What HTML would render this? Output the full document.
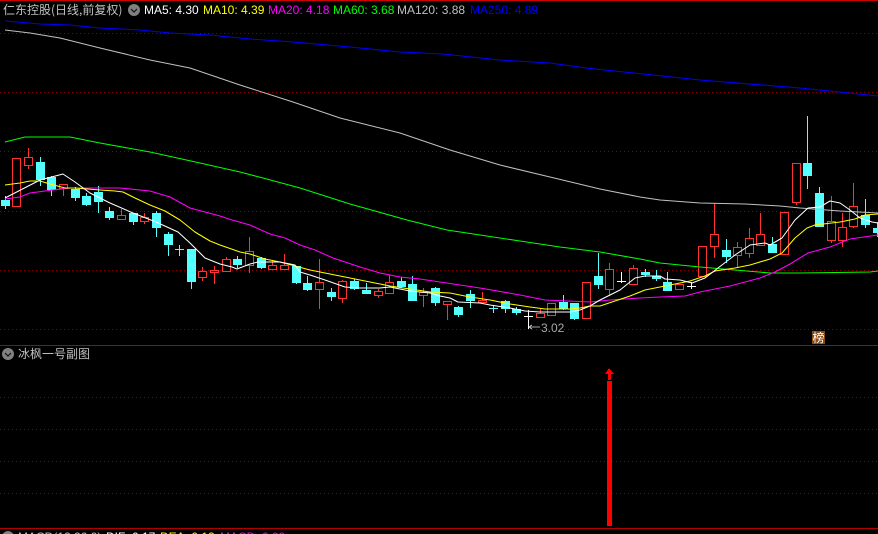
<!DOCTYPE html>
<html><head><meta charset="utf-8"><style>
html,body{margin:0;padding:0;background:#000;width:878px;height:534px;overflow:hidden}
#p{position:relative;width:878px;height:534px;overflow:hidden;background:#000}
svg{position:absolute;left:0;top:0}
.t{position:absolute;white-space:nowrap;font:12px/14px "Liberation Sans",sans-serif}
.z{font-family:"WenQuanYi Zen Hei","Noto Sans CJK SC",sans-serif;color:#c0c0c0}
.g{position:absolute;left:0;width:878px;height:1px;background:repeating-linear-gradient(90deg,#8c0000 0,#8c0000 1px,#000 1px,#000 4px)}
</style></head><body><div id="p">
<div class="g" style="top:33px"></div>
<div class="g" style="top:92px"></div>
<div class="g" style="top:151px"></div>
<div class="g" style="top:211px"></div>
<div class="g" style="top:270px"></div>
<div class="g" style="top:329px"></div>
<div class="g" style="top:397px"></div>
<div class="g" style="top:429px"></div>
<div class="g" style="top:461px"></div>
<div class="g" style="top:493px"></div>
<svg width="878" height="534" viewBox="0 0 878 534" fill="none">
<rect x="0" y="0" width="878" height="1" fill="#d00000"/>
<path d="M0 345.5H878" stroke="#b00000" shape-rendering="crispEdges"/>
<path d="M0 528.5H878" stroke="#b00000" shape-rendering="crispEdges"/>
<g shape-rendering="crispEdges">
<path stroke="#ff3232" d="M28.5 148V169M63.5 184V196M121.5 209V219M144.5 213V224M202.5 267V281M214.5 266V284M226.5 257V272M249.5 237V273M272.5 260V269M284.5 254V269M319.5 259V309M342.5 280V303M378.5 289V298M389.5 275V293M423.5 288V307M447.5 301V320M482.5 292V302M540.5 309V317M609.5 263V296M633.5 265V284M714.5 203V258M737.5 242V268M749.5 228V258M760.5 213V245M796.5 163V205M831.5 196V243M842.5 213V247M853.5 183V228"/>
<path stroke="#ff3232" fill="#000" d="M12.5 158.5h8v48h-8zM24.5 157.5h8v8h-8zM59.5 184.5h8v4h-8zM117.5 215.5h8v4h-8zM140.5 217.5h8v4h-8zM198.5 271.5h8v6h-8zM210.5 270.5h8v2h-8zM222.5 259.5h8v12h-8zM245.5 251.5h8v14h-8zM268.5 265.5h8v4h-8zM280.5 265.5h8v4h-8zM315.5 282.5h8v7h-8zM338.5 281.5h8v17h-8zM374.5 291.5h8v4h-8zM385.5 282.5h8v11h-8zM419.5 292.5h8v3h-8zM443.5 301.5h8v3h-8zM478.5 300.5h8v2h-8zM536.5 313.5h8v4h-8zM547.5 303.5h8v12h-8zM582.5 282.5h8v36h-8zM605.5 269.5h8v20h-8zM629.5 268.5h8v16h-8zM675.5 284.5h8v5h-8zM698.5 246.5h8v30h-8zM710.5 234.5h8v12h-8zM733.5 247.5h8v8h-8zM745.5 238.5h8v15h-8zM756.5 234.5h8v11h-8zM780.5 212.5h8v42h-8zM792.5 163.5h8v39h-8zM827.5 221.5h8v19h-8zM838.5 227.5h8v13h-8zM849.5 206.5h8v20h-8z"/>
<path stroke="#54ffff" d="M5.5 196V209M40.5 157V186M51.5 176V196M75.5 187V201M86.5 193V206M98.5 186V213M109.5 207V220M133.5 213V225M156.5 211V237M168.5 232V256M191.5 249V289M237.5 256V268M261.5 257V269M296.5 266V284M307.5 276V291M331.5 288V301M354.5 279V290M366.5 283V294M401.5 277V288M412.5 276V301M435.5 287V306M458.5 306V317M470.5 290V308M505.5 300V313M516.5 307V315M563.5 295V310M574.5 303V320M598.5 253V289M645.5 269V277M656.5 270V281M667.5 272V291M726.5 239V263M772.5 237V253M807.5 116V189M819.5 187V227M865.5 199V228M877.5 222V237M179.5 245V256M175 249.5H184M493.5 305V313M489 308.5H498"/>
<path fill="#54ffff" d="M1 200h9v6h-9zM36 162h9v18h-9zM47 177h9v13h-9zM71 189h9v9h-9zM82 196h9v9h-9zM94 192h9v10h-9zM105 211h9v7h-9zM129 213h9v9h-9zM152 213h9v15h-9zM164 234h9v11h-9zM187 249h9v33h-9zM233 259h9v6h-9zM257 258h9v10h-9zM292 266h9v17h-9zM303 283h9v7h-9zM327 292h9v5h-9zM350 281h9v8h-9zM362 290h9v4h-9zM397 281h9v6h-9zM408 284h9v17h-9zM431 288h9v15h-9zM454 307h9v8h-9zM466 294h9v7h-9zM501 301h9v8h-9zM512 309h9v4h-9zM559 302h9v7h-9zM570 303h9v16h-9zM594 276h9v9h-9zM641 272h9v3h-9zM652 276h9v3h-9zM663 282h9v9h-9zM722 250h9v7h-9zM768 244h9v9h-9zM803 163h9v13h-9zM815 193h9v34h-9zM861 215h9v10h-9zM873 228h9v5h-9z"/>
<path stroke="#fff" d="M528.5 310V329M524 316.5H533M621.5 272V283M617 281.5H626M691.5 282V289M687 286.5H696"/>
</g>
<g stroke-linejoin="round" stroke-width="1.05">
<path stroke="#0000ff" d="M5 21L40 24L70 25L100 28L140 30L170 33L210 35L250 39L293 42L350 47L400 52L443 54L500 60L550 63L586 68L700 80L800 88L878 96"/>
<path stroke="#c0c0c0" d="M5 30L30 33L60 38L100 48L150 60L190 68L240 85L293 102L340 118L400 133L450 150L500 165L550 177L600 189L640 197L660 200L700 203L745 204L780 206L800 208L840 211L878 213"/>
<path stroke="#00ff00" d="M5 142L25 137L70 137L100 143L150 152L200 163L240 172L263 178L300 188L350 204L407 220L447 230L480 235L520 241L560 247L600 252L640 259L660 263L680 265L700 267L735 270L770 273L800 273L870 272L878 271"/>
<path stroke="#ff00ff" d="M5 199L20 197L30 193L45 191L70 188L120 188L150 191L170 197L190 208L205 212L220 216L232 220L250 225L270 234L285 238L300 245L315 250L333 258L360 267L380 273L400 277L420 279L440 282L480 288L520 295L545 300L590 302L610 300L640 298L660 297L685 296L700 292L730 286L760 278L775 272L790 264L808 253L830 247L850 239L878 235"/>
<path stroke="#ffff00" d="M5 185L20 183L30 181L40 181L50 184L65 188L75 188L100 190L115 191L123 192L135 198L150 205L165 211L180 220L195 232L210 241L220 245L240 252L250 254L265 259L280 262L295 266L310 270L330 274L360 280L375 283L390 286L410 289L430 292L450 293L470 297L490 300L510 304L530 307L545 309L570 309L580 308L590 306L600 306L615 301L630 296L645 290L660 287L690 281L705 276L715 271L735 268L750 265L770 259L782 253L795 238L807 228L815 225L840 222L855 219L865 215L878 214"/>
<path stroke="#fff" d="M5 198L40 180L63 174L75 182L90 193L110 203L133 213L156 222L178 232L190 243L205 258L220 264L232 267L237 269L250 264L258 262L280 262L295 265L300 272L310 275L325 280L345 287L360 288L380 288L390 287L410 291L430 293L440 296L450 298L458 302L480 303L490 305L510 308L525 311L540 312L570 312L580 310L590 306L600 300L620 290L635 278L645 276L660 276L665 279L680 280L692 283L705 278L718 268L735 255L750 245L765 243L770 245L782 238L795 220L808 208L820 207L830 201L840 203L850 210L860 218L872 222L878 223"/>
</g>
<path d="M529 327H540M529 327l3-2M529 327l3 2" stroke="#a8a8a8" shape-rendering="crispEdges"/>
<path d="M607 381h5v145h-5zM609 368l5 6h-3v6h-3v-6h-3z" fill="#ff0000" shape-rendering="crispEdges"/>
<circle cx="134" cy="10" r="6" fill="#808080"/>
<path d="M131 9l3 3 3-3" stroke="#111" stroke-width="1.2"/>
<circle cx="8" cy="354" r="6" fill="#808080"/>
<path d="M5 353l3 3 3-3" stroke="#111" stroke-width="1.2"/>
<circle cx="8" cy="537" r="6" fill="#808080"/>
<rect x="812" y="331" width="13" height="13" fill="#8a4a10"/>
</svg>
<div class="t z" style="left:3px;top:3px">仁东控股(日线,前复权)</div>
<div class="t" style="left:144px;top:3px;color:#fff">MA5: 4.30</div>
<div class="t" style="left:203px;top:3px;color:#ff0">MA10: 4.39</div>
<div class="t" style="left:268px;top:3px;color:#f0f">MA20: 4.18</div>
<div class="t" style="left:333px;top:3px;color:#0f0">MA60: 3.68</div>
<div class="t" style="left:397px;top:3px;color:#c0c0c0">MA120: 3.88</div>
<div class="t" style="left:470px;top:3px;color:#00f">MA250: 4.89</div>
<div class="t" style="left:541px;top:321px;color:#a8a8a8">3.02</div>
<div class="t z" style="left:812px;top:331px;width:13px;text-align:center;color:#fff;font-size:12px;line-height:13px">榜</div>
<div class="t z" style="left:18px;top:347px">冰枫一号副图</div>
<div class="t" style="left:18px;top:530px;color:#c0c0c0">MACD(12,26,9)</div>
<div class="t" style="left:106px;top:530px;color:#fff">DIF: 0.17</div>
<div class="t" style="left:160px;top:530px;color:#ff0">DEA: 0.12</div>
<div class="t" style="left:220px;top:530px;color:#f0f">MACD: 0.09</div>
</div></body></html>
